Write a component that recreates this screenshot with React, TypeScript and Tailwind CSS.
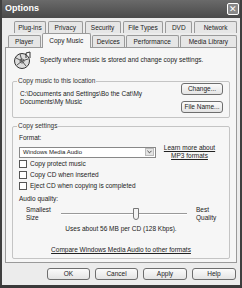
import React from "react";

const font = { fontFamily: "'Liberation Sans', Arial, sans-serif" };

function Tab({ label, w, active }: { label: string; w: string; active?: boolean }) {
  return (
    <div
      className={`${w} flex items-center justify-center border border-b-0 border-[#9a9a9a] rounded-t-[2px] text-[6.5px] text-[#222] whitespace-nowrap ${
        active ? "h-[15px] bg-[#f6f6f6] -mb-px relative z-10" : "h-[12px] bg-[#e6e6e6]"
      }`}
    >
      {label}
    </div>
  );
}

function Btn({ label, w, h = "h-[12px]" }: { label: string; w: string; h?: string }) {
  return (
    <div className={`${w} ${h} flex items-center justify-center border border-[#6e6e6e] rounded-[3px] bg-gradient-to-b from-[#fbfbfb] to-[#e4e4e4] text-[6.5px] text-[#222] whitespace-nowrap`}>
      {label}
    </div>
  );
}

function Check({ label }: { label: string }) {
  return (
    <div className="flex items-center gap-[3px] h-[11px]">
      <div className="w-[8px] h-[8px] border border-[#555] bg-white" />
      <span className="text-[6.5px] text-[#222]">{label}</span>
    </div>
  );
}

function CdIcon() {
  return (
    <svg width="22" height="18" viewBox="0 0 22 18">
      <circle cx="10" cy="10" r="7.5" fill="#ddd" stroke="#333" strokeWidth="1" />
      <circle cx="10" cy="10" r="2" fill="#fff" stroke="#333" strokeWidth="0.8" />
      <path d="M4 7 L10 10 L8 3 M16 8 L10 10 L14 15 M5 14 L10 10" stroke="#555" strokeWidth="1" fill="none" />
      <path d="M14 2 l4 -1 l0 6 M14 2 l0 5" stroke="#333" strokeWidth="1" fill="none" />
    </svg>
  );
}

export default function App() {
  return (
    <div className="w-[242px] h-[288px] bg-[#3a3a3a]" style={font}>
      <div className="w-[242px] h-[285px] flex flex-col border-x-[2px] border-[#3f3f3f] bg-[#ececec]">
        {/* Title bar */}
        <div className="h-[18px] bg-gradient-to-b from-[#6a6a6a] to-[#4a4a4a] flex items-center justify-between pl-[3px] pr-[1px]">
          <span className="text-white font-bold text-[9px]">Options</span>
          <div className="w-[12px] h-[12px] border border-white rounded-[2px] bg-[#888] flex items-center justify-center text-white text-[9px] leading-none">
            ✕
          </div>
        </div>

        <div className="flex-1 flex flex-col px-[3px] pt-[3px]">
          {/* Tabs */}
          <div className="flex pl-[9px] gap-[2px]">
            <Tab label="Plug-ins" w="w-[32px]" />
            <Tab label="Privacy" w="w-[35px]" />
            <Tab label="Security" w="w-[36px]" />
            <Tab label="File Types" w="w-[41px]" />
            <Tab label="DVD" w="w-[27px]" />
            <Tab label="Network" w="w-[43px]" />
          </div>
          <div className="flex items-end pl-[3px] gap-[1px]">
            <Tab label="Player" w="w-[33px]" />
            <Tab label="Copy Music" w="w-[50px]" active />
            <Tab label="Devices" w="w-[33px]" />
            <Tab label="Performance" w="w-[54px]" />
            <Tab label="Media Library" w="w-[58px]" />
          </div>

          {/* Panel */}
          <div className="h-[216px] border border-[#9a9a9a] bg-[#f6f6f6] px-[6px] pt-[2px] flex flex-col">
            <div className="flex items-center gap-[6px] h-[19px]">
              <CdIcon />
              <span className="text-[6.5px] text-[#222]">Specify where music is stored and change copy settings.</span>
            </div>

            {/* Group 1 */}
            <div className="mt-[12px] relative border border-[#c4c4c4] rounded-[2px] h-[37px] pl-[7px] pr-[6px] flex justify-between">
              <span className="absolute -top-[4px] left-[4px] bg-[#f6f6f6] px-[1px] text-[6.5px] text-[#333] leading-none">
                Copy music to this location
              </span>
              <div className="pt-[8px] text-[6.5px] text-[#222] leading-[8px]">
                C:\Documents and Settings\Bo the Cat\My
                <br />
                Documents\My Music
              </div>
              <div className="flex flex-col gap-[6px] pt-[1px]">
                <Btn label="Change..." w="w-[42px]" />
                <Btn label="File Name..." w="w-[42px]" />
              </div>
            </div>

            {/* Group 2 */}
            <div className="mt-[8px] relative border border-[#c4c4c4] rounded-[2px] h-[133px] px-[6px] pt-[6px] flex flex-col">
              <span className="absolute -top-[4px] left-[4px] bg-[#f6f6f6] px-[1px] text-[6.5px] text-[#333] leading-none">
                Copy settings
              </span>
              <span className="text-[6.5px] text-[#222] leading-[9px]">Format:</span>
              <div className="flex items-center mt-[2px]">
                <div className="w-[137px] h-[11px] border border-[#888] bg-white flex items-center justify-between pl-[3px] pr-[1px]">
                  <span className="text-[6px] text-[#222]">Windows Media Audio</span>
                  <div className="w-[9px] h-[8px] bg-[#e4e4e4] border border-[#bbb] flex items-center justify-center">
                    <svg width="5" height="4" viewBox="0 0 6 4">
                      <path d="M0.5 0.5 L3 3 L5.5 0.5" stroke="#333" strokeWidth="1" fill="none" />
                    </svg>
                  </div>
                </div>
                <div className="flex-1 text-center text-[6.5px] text-[#222] underline leading-[8px]">
                  Learn more about
                  <br />
                  MP3 formats
                </div>
              </div>
              <div className="-mt-[2px] flex flex-col">
                <Check label="Copy protect music" />
                <Check label="Copy CD when inserted" />
                <Check label="Eject CD when copying is completed" />
              </div>
              <span className="mt-[3px] text-[6.5px] text-[#222] leading-[9px]">Audio quality:</span>
              <div className="flex items-center mt-[3px] pl-[7px]">
                <div className="w-[35px] text-[6.5px] text-[#222] leading-[8px]">
                  Smallest
                  <br />
                  Size
                </div>
                <div className="relative w-[126px] h-[13px] flex items-center">
                  <div className="w-full h-[2px] border-t border-[#999] border-b border-b-white" />
                  <div className="absolute left-[72px] top-0 w-[6px] h-[12px] bg-[#f4f4f4] border border-[#777] rounded-b-[3px]" />
                </div>
                <div className="pl-[9px] text-[6.5px] text-[#222] leading-[8px]">
                  Best
                  <br />
                  Quality
                </div>
              </div>
              <div className="mt-[2px] text-center text-[6.5px] text-[#222]">Uses about 56 MB per CD (128 Kbps).</div>
              <div className="mt-auto mb-[3px] text-center text-[6.5px] text-[#222] underline">
                Compare Windows Media Audio to other formats
              </div>
            </div>
          </div>

          {/* Buttons */}
          <div className="flex justify-end gap-[5px] pr-[1px] mt-[5px]">
            <Btn label="OK" w="w-[43px]" />
            <Btn label="Cancel" w="w-[43px]" />
            <Btn label="Apply" w="w-[44px]" />
            <Btn label="Help" w="w-[44px]" />
          </div>
        </div>
      </div>
    </div>
  );
}
